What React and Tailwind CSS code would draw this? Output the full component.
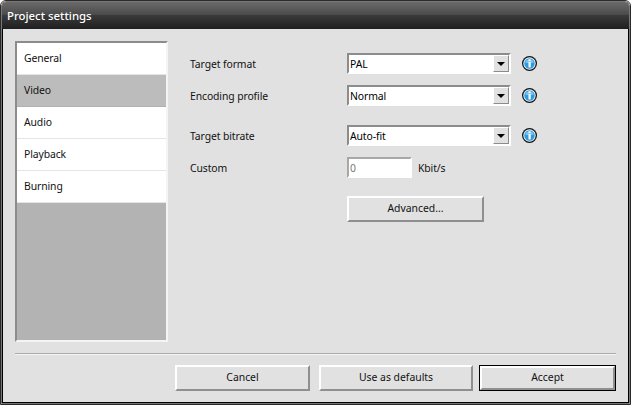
const FONT = 'font-["Noto_Sans","Open_Sans",sans-serif]'

function InfoIcon() {
  return (
    <svg width="15" height="15" viewBox="0 0 15 15" className="shrink-0 -mt-px">
      <circle cx="7.5" cy="7.5" r="7.5" fill="#111" />
      <circle cx="7.5" cy="7.5" r="6.2" fill="#e8f4fb" />
      <circle cx="7.5" cy="7.5" r="5.2" fill="#2f9be0" />
      <path d="M3.2 6.6a4.4 4 0 0 1 8.6 0a9 5 0 0 1-8.6 0z" fill="#7cc4f0" />
      <rect x="6.5" y="3.3" width="2.2" height="1.8" fill="#fff" />
      <rect x="6.5" y="6" width="2.2" height="5.4" fill="#fff" />
    </svg>
  )
}

function Select({ value }) {
  return (
    <div className="flex items-center gap-[11px]">
      <div className="w-[164px] h-[21px] flex items-stretch bg-white border-2 border-t-[#8c8c8c] border-l-[#8c8c8c] border-r-white border-b-white">
        <div className="flex-1 pl-[1px] pt-[2px] flex items-center text-[10.4px] tracking-[-0.1px] text-black">{value}</div>
        <div className="w-[16px] flex items-center justify-center bg-[#e1e1e1] border border-t-white border-l-white border-r-[#8c8c8c] border-b-[#8c8c8c]">
          <div className="w-0 h-0 border-x-[4px] border-x-transparent border-t-[4px] border-t-black" />
        </div>
      </div>
      <InfoIcon />
    </div>
  )
}

function Label({ children }) {
  return <div className="w-[157px] pt-[2px] text-[10.4px] tracking-[-0.1px] text-[#111]">{children}</div>
}

function Button({ children, width, primary }) {
  return (
    <div className={`h-[26px] ${width} ${primary ? 'border border-black' : ''}`}>
      <div className="h-full flex items-center justify-center text-[10.4px] text-[#111] bg-[#e1e1e1] border-2 border-t-white border-l-white border-r-[#8f8f8f] border-b-[#8f8f8f]">
        {children}
      </div>
    </div>
  )
}

const MENU = ['General', 'Video', 'Audio', 'Playback', 'Burning']

export default function App() {
  return (
    <div className={`w-[631px] h-[405px] border border-[#2a2a2a] rounded-t-[6px] overflow-hidden ${FONT}`}>
      <div className="h-full flex flex-col border border-[#777] rounded-t-[5px] overflow-hidden">
        {/* title bar */}
        <div className="h-[27px] shrink-0 flex items-center pl-[5px] text-[11.4px] font-medium text-white bg-[linear-gradient(to_bottom,#6a6a6a_0%,#4c4c4c_46%,#3a3a3a_50%,#1f1f1f_100%)]">
          Project settings
        </div>

        <div className="flex-1 flex flex-col px-[12px] bg-[#e1e1e1] border-x border-b border-black">
          <div className="flex h-[324px]">
            {/* side menu */}
            <div className="w-[153px] h-[301px] mt-[12px] flex flex-col bg-[#b3b3b3] border-2 border-t-[#8c8c8c] border-l-[#8c8c8c] border-r-[#f4f4f4] border-b-[#f4f4f4]">
              {MENU.map((item) => (
                <div
                  key={item}
                  className={`h-[32px] flex items-center pl-[7px] text-[10.4px] tracking-[-0.1px] text-[#111] border-b ${
                    item === 'Video' ? 'bg-[#bcbcbc] border-[#b0b0b0]' : 'bg-white border-[#e4e4e4]'
                  }`}
                >
                  {item}
                </div>
              ))}
            </div>

            {/* video settings */}
            <div className="flex-1 flex flex-col pl-[22px] pt-[24px]">
              <div className="h-[21px] flex items-center">
                <Label>Target format</Label>
                <Select value="PAL" />
              </div>
              <div className="h-[21px] flex items-center mt-[11px]">
                <Label>Encoding profile</Label>
                <Select value="Normal" />
              </div>
              <div className="h-[21px] flex items-center mt-[19px]">
                <Label>Target bitrate</Label>
                <Select value="Auto-fit" />
              </div>
              <div className="h-[21px] flex items-center mt-[11px]">
                <Label>Custom</Label>
                <div className="w-[65px] h-[21px] flex items-center bg-white pl-[1px] pt-[2px] text-[10.4px] text-[#777] border-2 border-t-[#a8a8a8] border-l-[#a8a8a8] border-r-white border-b-white">
                  0
                </div>
                <div className="ml-[6px] pt-[2px] text-[10.4px] tracking-[-0.1px] text-[#111]">Kbit/s</div>
              </div>
              <div className="ml-[157px] mt-[18px]">
                <Button width="w-[137px]">Advanced...</Button>
              </div>
            </div>
          </div>

          {/* footer */}
          <div className="border-t border-t-[#aaa] border-b border-b-[#f4f4f4] w-[601px]" />
          <div className="w-[601px] flex justify-end items-center gap-[6px] mt-[10px]">
            <div className="mr-[3px]">
              <Button width="w-[135px]">Cancel</Button>
            </div>
            <Button width="w-[154px]">Use as defaults</Button>
            <Button width="w-[137px]" primary>Accept</Button>
          </div>
        </div>
      </div>
    </div>
  )
}
